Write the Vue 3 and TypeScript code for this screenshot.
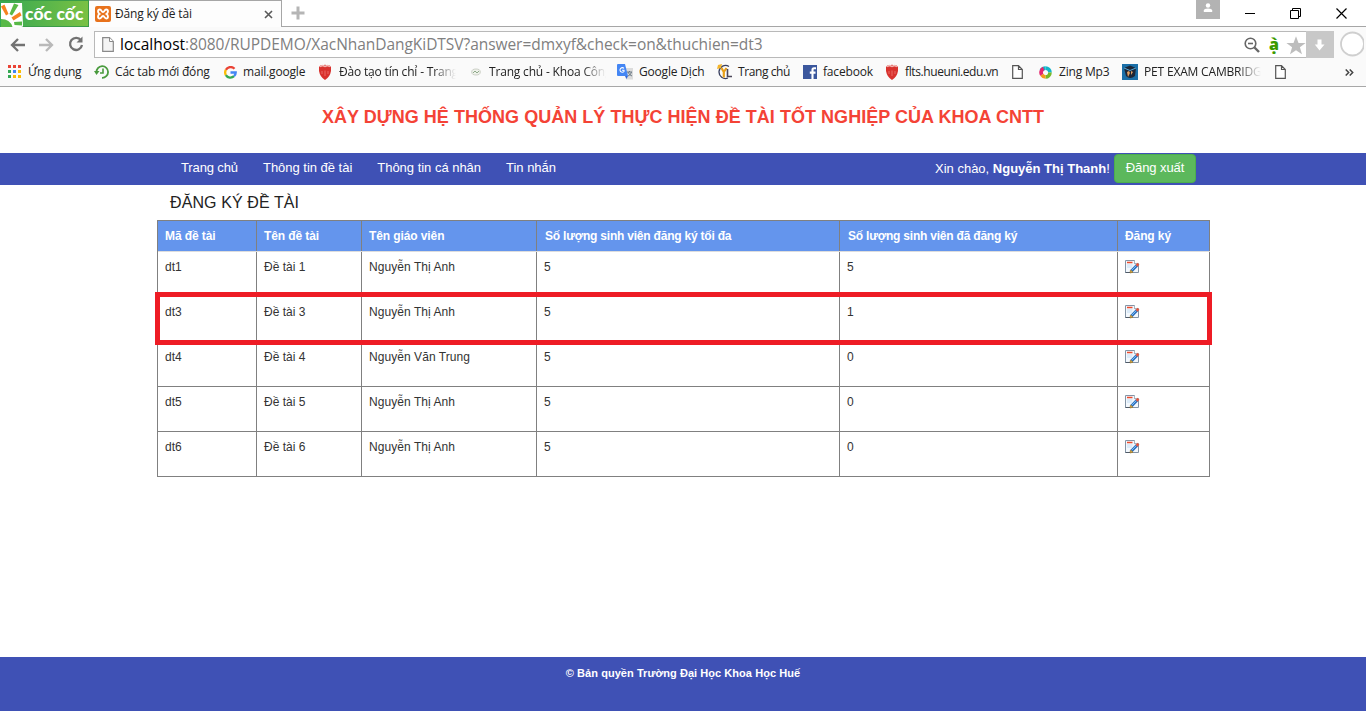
<script setup lang="ts">
interface Bookmark {
  icon: string
  label: string
  fade?: boolean
}
interface Topic {
  id: string
  name: string
  teacher: string
  max: number
  registered: number
}

const bookmarks: Bookmark[] = [
  { icon: 'apps', label: 'Ứng dụng' },
  { icon: 'recent', label: 'Các tab mới đóng' },
  { icon: 'google', label: 'mail.google' },
  { icon: 'shield', label: 'Đào tạo tín chỉ - Trang', fade: true },
  { icon: 'faint', label: 'Trang chủ - Khoa Công', fade: true },
  { icon: 'translate', label: 'Google Dịch' },
  { icon: 'yl', label: 'Trang chủ' },
  { icon: 'facebook', label: 'facebook' },
  { icon: 'shield', label: 'flts.hueuni.edu.vn' },
  { icon: 'page', label: '' },
  { icon: 'zing', label: 'Zing Mp3' },
  { icon: 'pet', label: 'PET EXAM CAMBRIDGE', fade: true },
  { icon: 'page', label: '' },
]

const menu: string[] = ['Trang chủ', 'Thông tin đề tài', 'Thông tin cá nhân', 'Tin nhắn']

const headers: string[] = [
  'Mã đề tài',
  'Tên đề tài',
  'Tên giáo viên',
  'Số lượng sinh viên đăng ký tối đa',
  'Số lượng sinh viên đã đăng ký',
  'Đăng ký',
]

const topics: Topic[] = [
  { id: 'dt1', name: 'Đề tài 1', teacher: 'Nguyễn Thị Anh', max: 5, registered: 5 },
  { id: 'dt3', name: 'Đề tài 3', teacher: 'Nguyễn Thị Anh', max: 5, registered: 1 },
  { id: 'dt4', name: 'Đề tài 4', teacher: 'Nguyễn Văn Trung', max: 5, registered: 0 },
  { id: 'dt5', name: 'Đề tài 5', teacher: 'Nguyễn Thị Anh', max: 5, registered: 0 },
  { id: 'dt6', name: 'Đề tài 6', teacher: 'Nguyễn Thị Anh', max: 5, registered: 0 },
]

const dots: string[] = ['#ea4335', '#ea4335', '#ea4335', '#34a853', '#4285f4', '#fbbc05', '#34a853', '#fbbc05', '#fbbc05']
</script>

<template>
  <div class="window">
    <header class="tabstrip">
      <div class="brand">
        <svg class="brand-mark" width="24" height="25" viewBox="0 0 24 25">
          <path d="M1 1H22L23 24Q23 25 21 25H1Z" fill="#fff" />
          <path d="M1 17Q10 17 12.500 25H1Z" fill="#58b947" />
          <path d="M1 4.500L4.500 2.500L8.500 12L6 13.500Z" fill="#f58220" />
          <path d="M14 1.500L18.500 3L12 13.500L9.500 12Z" fill="#58b947" />
          <path d="M20 10L21.500 13.500L13.500 18.500L11.500 15.500Z" fill="#f58220" />
          <path d="M14 20L22 19.500V23.500L14.500 23Z" fill="#58b947" />
        </svg>
        <span class="brand-name">cốc cốc</span>
      </div>
      <div class="tab">
        <svg class="tab-icon" width="16" height="16" viewBox="0 0 16 16">
          <rect width="16" height="16" rx="2" fill="#e8721c" />
          <path d="M4.800 3.500C2.600 3.500 2.400 6.800 4.500 8C2.400 9.200 2.600 12.500 4.800 12.500C6.800 12.500 6.300 10 8 10S9.200 12.500 11.200 12.500C13.400 12.500 13.600 9.200 11.500 8C13.600 6.800 13.400 3.500 11.200 3.500C9.200 3.500 9.700 6 8 6S6.800 3.500 4.800 3.500Z" fill="none" stroke="#fff" stroke-width="1.900" />
        </svg>
        <span class="tab-title">Đăng ký đề tài</span>
        <svg class="tab-close" width="9" height="9" viewBox="0 0 9 9"><path d="M1 1L8 8M8 1L1 8" stroke="#5a5a5a" stroke-width="1.6" /></svg>
      </div>
      <div class="strip-rest">
        <svg class="plus" width="14" height="14" viewBox="0 0 14 14"><path d="M7 .5V13.500M.5 7H13.500" stroke="#b5b5b5" stroke-width="3" /></svg>
        <div class="profile">
          <svg width="10" height="10" viewBox="0 0 10 10"><circle cx="5" cy="2.500" r="2.200" fill="#fff" /><path d="M.8 9V7.500Q1 5.500 5 5.500T9.200 7.500V9Z" fill="#fff" /></svg>
        </div>
        <svg class="win-min" width="11" height="11" viewBox="0 0 11 11"><path d="M0 5.500H10" stroke="#000" /></svg>
        <svg class="win-max" width="11" height="11" viewBox="0 0 11 11"><path d="M.5 2.500H8.500V10.500H.5ZM2.500 2.500V.5H10.500V8.500H8.500" fill="none" stroke="#000" /></svg>
        <svg class="win-close" width="11" height="11" viewBox="0 0 11 11"><path d="M.5 .5L10.500 10.500M10.500 .5L.5 10.500" stroke="#000" stroke-width="1.200" /></svg>
      </div>
    </header>

    <div class="toolbar">
      <svg class="back" width="16" height="14" viewBox="0 0 16 14"><path d="M15 7H2M8 1L2 7L8 13" fill="none" stroke="#727272" stroke-width="2.300" /></svg>
      <svg class="forward" width="16" height="14" viewBox="0 0 16 14"><path d="M1 7H14M8 1L14 7L8 13" fill="none" stroke="#b9b9b9" stroke-width="2.300" /></svg>
      <svg class="reload" width="16" height="16" viewBox="0 0 16 16"><path d="M13 4.500A6 6 0 1 0 14 9" fill="none" stroke="#727272" stroke-width="2.300" /><path d="M14.500 .5V6.500H8.500Z" fill="#727272" /></svg>
      <div class="address">
        <svg class="doc" width="12" height="15" viewBox="0 0 12 15"><path d="M.7 .7H7.500L11.300 4.500V14.300H.7Z" fill="#f4f4f4" stroke="#8a8a8a" stroke-width="1.200" /><path d="M7.500 .7V4.500H11.300" fill="#fff" stroke="#8a8a8a" /></svg>
        <span class="url"><b>localhost</b>:8080/RUPDEMO/XacNhanDangKiDTSV?answer=dmxyf&amp;check=on&amp;thuchien=dt3</span>
        <svg class="magnifier" width="16" height="16" viewBox="0 0 16 16"><circle cx="6.500" cy="6.500" r="5.300" fill="none" stroke="#666" stroke-width="1.600" /><path d="M4 6.500H9" stroke="#666" stroke-width="1.600" /><path d="M10.500 10.500L15 15" stroke="#666" stroke-width="2.400" /></svg>
        <span class="accent">ạ̀</span>
        <svg class="star" width="20" height="19" viewBox="0 0 20 19"><path d="M10 .3L12.500 7H19.600L13.900 11.300L16 18.300L10 14.200L4 18.300L6.100 11.300L.4 7H7.500Z" fill="#bdbdbd" /></svg>
        <div class="download"><svg width="12" height="12" viewBox="0 0 12 12"><path d="M3.500 .5H7.500V5.500H10.500L5.500 11.500L.8 5.500H3.500Z" fill="#fff" /></svg></div>
      </div>
      <svg class="ring" width="24" height="26" viewBox="0 0 24 26"><circle cx="12.500" cy="13" r="11.500" fill="#fff" stroke="#cfcfcf" stroke-width="1.800" /></svg>
    </div>

    <nav class="bookmarks">
      <div v-for="(mark, i) in bookmarks" :key="i" class="bookmark">
        <span class="mark-icon">
          <svg v-if="mark.icon === 'apps'" width="14" height="14" viewBox="0 0 14 14">
            <rect v-for="(color, d) in dots" :key="d" :x="(d % 3) * 5" :y="Math.floor(d / 3) * 5" width="3" height="3" :fill="color" />
          </svg>
          <svg v-else-if="mark.icon === 'recent'" width="16" height="16" viewBox="0 0 16 16"><path d="M2.500 8.500A5.800 5.800 0 1 1 8 13.800" fill="none" stroke="#4a9b3e" stroke-width="1.800" /><path d="M0 7H5.500L2.500 11Z" fill="#4a9b3e" /><path d="M9 4.500V9H6" fill="none" stroke="#4a9b3e" stroke-width="1.600" /></svg>
          <svg v-else-if="mark.icon === 'google'" class="google" width="13" height="13" viewBox="0 0 14 14" fill="none" stroke-width="2.500"><path d="M2 4.200A5.700 5.700 0 0 1 11.300 3" stroke="#ea4335" /><path d="M2 4.200A5.800 5.800 0 0 0 2 9.800" stroke="#fbbc05" /><path d="M2 9.800A5.700 5.700 0 0 0 10.800 11" stroke="#34a853" /><path d="M10.800 11Q12.600 9.500 12.600 7H7" stroke="#4285f4" /></svg>
          <svg v-else-if="mark.icon === 'shield'" width="14" height="16" viewBox="0 0 14 16"><path d="M1 3L3 1L5 2L7 .5L9 2L11 1L13 3V7Q12 13 7 16Q2 13 1 7Z" fill="#d8322e" /><path d="M2 2.500L4.500 1.500L7 2.500L9.500 1.500L12 2.500" fill="none" stroke="#f3b7b3" stroke-width="1.600" /><path d="M4 7V10M7 6.500V12M10 7V10" fill="none" stroke="#ea6a64" /></svg>
          <svg v-else-if="mark.icon === 'faint'" class="faint" width="10" height="8" viewBox="0 0 10 8"><ellipse cx="5" cy="4" rx="4.300" ry="3" fill="#eef1ea" stroke="#cdd1c8" /><path d="M2 5L4 3L6 5L8 3" fill="none" stroke="#8fa98a" /></svg>
          <svg v-else-if="mark.icon === 'translate'" width="17" height="16" viewBox="0 0 17 16"><path d="M7 4H16V15.500H9Z" fill="#dcdcdc" /><path d="M10 8H15M12.500 7V8M11 8Q12 11 15 12M14.500 8Q14 11 11 12" fill="none" stroke="#6d7b86" /><path d="M1 0H8L11 12H1Q0 12 0 11V1Q0 0 1 0Z" fill="#4486f4" /><path d="M8 12H11L9.500 15Z" fill="#3367d6" /><path d="M7 4.400A2.300 2.300 0 1 0 7 7.500V6.200H5" fill="none" stroke="#fff" stroke-width="1.100" /></svg>
          <svg v-else-if="mark.icon === 'yl'" width="17" height="16" viewBox="0 0 17 16"><path d="M13 2.500A6.500 6.500 0 1 0 12 14" fill="none" stroke="#3a4060" stroke-width="1.300" /><path d="M2 1L6 0L5 4L1 5Z" fill="#f5b52a" /><path d="M5.500 4L7.800 8V13.500M10.500 4L7.800 8" fill="none" stroke="#e9a01a" stroke-width="2.200" /><path d="M11.500 5V12.500H16" fill="none" stroke="#4c475a" stroke-width="1.600" /></svg>
          <svg v-else-if="mark.icon === 'facebook'" width="14" height="14" viewBox="0 0 14 14"><rect width="14" height="14" fill="#3b579d" /><path d="M9.500 14V5Q9.500 3.200 11 3.200H13M6.800 7.600H12.500" fill="none" stroke="#fff" stroke-width="2.100" /></svg>
          <svg v-else-if="mark.icon === 'zing'" class="zing" width="13" height="13" viewBox="0 0 14 14" fill="none" stroke-width="4"><path d="M2.500 5A5 5 0 0 1 7 2.200" stroke="#12b5c9" /><path d="M7 2.200A4.800 4.800 0 0 1 11.800 7" stroke="#12b5c9" /><path d="M11.800 7A4.800 4.800 0 0 1 7 11.800" stroke="#78b928" /><path d="M7 11.800A4.800 4.800 0 0 1 3 9.500" stroke="#f59a1b" /><path d="M3 9.500A4.800 4.800 0 0 1 5 2.600" stroke="#e5266e" /></svg>
          <svg v-else-if="mark.icon === 'pet'" width="16" height="16" viewBox="0 0 16 16"><rect width="16" height="16" fill="#1a6fa8" /><path d="M2 4L8 1.500L14 4L13 12Q8 16 4 12Z" fill="#1d2636" /><path d="M2 4L8 6.500L14 4" fill="none" stroke="#56a9d8" /><path d="M5 8L7 7L8 9L6 13ZM9 7L11 8L9 11Z" fill="#e0a064" /></svg>
          <svg v-else class="page" width="11" height="14" viewBox="0 0 11 14"><path d="M.7 .7H6.500L10.300 4.500V13.300H.7ZM6.500 .7V4.500H10.300" fill="#fff" stroke="#555" stroke-width="1.200" /></svg>
        </span>
        <span v-if="mark.label" class="mark-label" :class="{ fade: mark.fade }">{{ mark.label }}</span>
      </div>
      <svg class="more" width="9" height="7" viewBox="0 0 9 7"><path d="M.7 .5L3.700 3.500L.7 6.500M4.700 .5L7.700 3.500L4.700 6.500" fill="none" stroke="#444" stroke-width="1.500" /></svg>
    </nav>

    <main class="site">
      <h1><span>XÂY DỰNG HỆ THỐNG QUẢN LÝ THỰC HIỆN ĐỀ TÀI TỐT NGHIỆP CỦA KHOA CNTT</span></h1>
      <div class="menubar">
        <a v-for="item in menu" :key="item" class="menu-item">{{ item }}</a>
        <span class="greeting">Xin chào, <b>Nguyễn Thị Thanh</b>!</span>
        <button class="logout">Đăng xuất</button>
      </div>
      <section class="content">
        <h2>ĐĂNG KÝ ĐỀ TÀI</h2>
        <div class="table">
          <div class="row head">
            <div v-for="head in headers" :key="head" class="cell">{{ head }}</div>
          </div>
          <div v-for="topic in topics" :key="topic.id" class="row">
            <div class="cell">{{ topic.id }}</div>
            <div class="cell">{{ topic.name }}</div>
            <div class="cell teacher">{{ topic.teacher }}</div>
            <div class="cell">{{ topic.max }}</div>
            <div class="cell">{{ topic.registered }}</div>
            <div class="cell">
              <svg class="edit" width="15" height="14" viewBox="0 0 15 14">
                <path d="M.5 .5H9.500V3.500H13.500V12.500H.5Z" fill="#f3f8fd" stroke="#8494a5" />
                <path d="M9.500 .5V3.500H13.500" fill="none" stroke="#a9b5c0" />
                <path d="M2 2.500H7.500" stroke="#ee4b2b" stroke-width="1.500" />
                <path d="M2 5H7.500M2 7H7" stroke="#c4ddf3" />
                <path d="M.5 12.500H5" stroke="#4e5a68" />
                <path d="M6.500 11L12 5.200" stroke="#2c6fbd" stroke-width="3" />
                <path d="M6.800 10.300L11.500 5.300" stroke="#7cc1f5" />
                <path d="M11.500 5.700L13.500 3.800" stroke="#e2553d" stroke-width="2.600" />
                <path d="M5 13L5.500 10L8 12.200Z" fill="#e5b33e" stroke="#8b641e" stroke-width=".6" />
              </svg>
            </div>
          </div>
          <div class="highlight"></div>
        </div>
      </section>
      <footer><span>© Bản quyền Trường Đại Học Khoa Học Huế</span></footer>
    </main>
  </div>
</template>

<style>
body {
  margin: 0;
  background: #fff;
}
</style>

<style scoped>
* {
  box-sizing: border-box;
}
svg {
  display: block;
  flex: none;
}
.window {
  width: 1366px;
  height: 712px;
  overflow: hidden;
  background: #fff;
  font-family: 'Open Sans', 'Noto Sans', sans-serif;
  font-size: 12px;
  color: #222;
  white-space: nowrap;
}
.tabstrip {
  display: flex;
  height: 27px;
}
.brand {
  display: flex;
  width: 89px;
  height: 27px;
  padding: 1px 0 0 0;
  background: linear-gradient(90deg, #35a853, #7ac143);
  border: 1px solid #3a9c48;
  border-left: 0;
}
.brand-mark {
  width: 24px;
}
.brand-name {
  margin-left: 1px;
  font: 900 17.5px/24px Lato, 'Open Sans', sans-serif;
  letter-spacing: 0.1px;
  color: #fff;
}
.tab {
  display: flex;
  width: 193px;
  padding: 5px 0 0 6px;
  border-top: 1px solid #a6a6a6;
  border-right: 1px solid #a6a6a6;
  background: #fdfdfd;
}
.tab-title {
  width: 150px;
  margin-left: 4px;
  line-height: 16px;
  letter-spacing: -0.15px;
}
.tab-close {
  margin: 4px 0 0 -1px;
}
.strip-rest {
  display: flex;
  flex: 1;
  border-bottom: 1px solid #a6a6a6;
}
.plus {
  margin: 6px 0 0 9px;
}
.profile {
  display: flex;
  justify-content: center;
  width: 24px;
  height: 19px;
  margin-left: 891px;
  padding-top: 3px;
  background: #b3b3b3;
}
.win-min {
  margin: 8px 0 0 25px;
}
.win-max {
  margin: 8px 0 0 34px;
}
.win-close {
  margin: 8px 0 0 35px;
}
.toolbar {
  display: flex;
  height: 31px;
  background: #fafafa;
}
.back {
  margin: 11px 0 0 10px;
}
.forward {
  margin: 11px 0 0 12px;
}
.reload {
  margin: 9px 0 0 14px;
}
.address {
  display: flex;
  width: 1240px;
  height: 27px;
  margin: 4px 0 0 10px;
  border: 1px solid #b9b9b9;
  border-right: 0;
  background: #fff;
}
.doc {
  margin: 5px 0 0 7px;
}
.url {
  width: 1124px;
  margin-left: 6px;
  font-size: 15.5px;
  line-height: 25px;
  letter-spacing: -0.05px;
  color: #808080;
}
.url b {
  font-weight: 400;
  letter-spacing: 0.02px;
  color: #000;
}
.magnifier {
  margin: 5px 0 0 0;
}
.accent {
  width: 12px;
  margin-left: 9px;
  font-size: 16px;
  font-weight: 800;
  line-height: 24px;
  color: #3a9a00;
}
.star {
  margin: 4px 0 0 5px;
}
.download {
  display: flex;
  justify-content: center;
  align-items: center;
  width: 28px;
  height: 27px;
  margin: -1px 0 0 auto;
  background: #c8c8c8;
}
.ring {
  margin: 4px 0 0 6px;
}
.bookmarks {
  display: grid;
  grid-template-columns: 86px 129px 95px 150px 149px 99px 87px 82px 125px 28px 84px 151px 72px 20px;
  height: 29px;
  padding-left: 8px;
  border-bottom: 1px solid #a8a8a8;
  background: #fafafa;
}
.bookmark {
  display: flex;
  height: 28px;
  align-items: center;
}
.mark-icon {
  display: flex;
  flex: none;
  justify-content: flex-start;
  width: 20px;
}
.bookmark:nth-child(2) .mark-icon,
.bookmark:nth-child(4) .mark-icon,
.bookmark:nth-child(5) .mark-icon,
.bookmark:nth-child(11) .mark-icon {
  width: 21px;
}
.bookmark:nth-child(6) .mark-icon,
.bookmark:nth-child(7) .mark-icon,
.bookmark:nth-child(12) .mark-icon {
  width: 22px;
}
.google,
.zing {
  margin-left: 1px;
}
.faint {
  margin-left: 3px;
}
.page {
  margin-left: 2px;
}
.mark-label {
  line-height: 20px;
  letter-spacing: -0.18px;
}
.bookmark:nth-child(7) .mark-label,
.bookmark:nth-child(9) .mark-label {
  letter-spacing: -0.4px;
}
.fade {
  width: 117px;
  overflow: hidden;
  -webkit-mask-image: linear-gradient(90deg, #000 80%, transparent);
  mask-image: linear-gradient(90deg, #000 80%, transparent);
}
.more {
  margin-top: 11px;
}
.site {
  display: flex;
  flex-direction: column;
  height: 624px;
  font-family: 'Liberation Sans', Arial, sans-serif;
}
h1 {
  height: 66px;
  margin: 0;
  padding-top: 19px;
  font-size: 18px;
  line-height: 22px;
  letter-spacing: 0.035px;
  text-align: center;
  color: #f44336;
}
.menubar {
  display: flex;
  flex: none;
  height: 32px;
  padding-left: 181px;
  background: #3f51b5;
  font-size: 13px;
  line-height: 30px;
  color: #fff;
}
.menu-item {
  margin-right: 25px;
  letter-spacing: -0.02px;
}
.menu-item:first-child {
  letter-spacing: -0.12px;
}
.greeting {
  width: 179px;
  margin-left: auto;
  line-height: 31px;
}
.logout {
  width: 82px;
  height: 29px;
  margin: 1px 170px 0 0;
  padding: 0;
  border: 1px solid #4cae4c;
  border-radius: 4px;
  background: #5cb85c;
  font: 13px/25px 'Liberation Sans', Arial, sans-serif;
  letter-spacing: -0.1px;
  color: #fff;
}
.logout {
  padding-bottom: 2px;
}
.content {
  flex: 1;
  width: 1053px;
  margin-left: 157px;
}
h2 {
  height: 35px;
  margin: 0;
  padding: 7px 0 0 13px;
  font-size: 16px;
  font-weight: 400;
  line-height: 21px;
  letter-spacing: 0.1px;
  color: #222;
}
.table {
  position: relative;
  border-top: 1px solid #808080;
  border-left: 1px solid #808080;
}
.row {
  display: grid;
  grid-template-columns: 99px 105px 175px 303px 278px 92px;
  height: 45px;
  border-bottom: 1px solid #808080;
}
.cell {
  padding: 7px 0 0 7px;
  border-right: 1px solid #808080;
  line-height: 17px;
  color: #333;
}
.teacher {
  letter-spacing: 0.06px;
}
.head {
  height: 31px;
  border-bottom-color: #ddd;
  background: #6495ed;
}
.head .cell {
  color: #fff;
  font-weight: 700;
  letter-spacing: -0.1px;
}
.head .cell:nth-child(4),
.head .cell:nth-child(5) {
  padding-left: 8px;
  letter-spacing: -0.21px;
}
.edit {
  margin-top: 1px;
}
.highlight {
  position: absolute;
  top: 71px;
  left: -3px;
  width: 1057px;
  height: 53px;
  border: 5px solid #ee1c25;
}
footer {
  height: 54px;
  padding-top: 8px;
  background: #3f51b5;
  font-size: 11px;
  font-weight: 700;
  line-height: 16px;
  letter-spacing: 0.05px;
  text-align: center;
  color: #fff;
}
</style>
